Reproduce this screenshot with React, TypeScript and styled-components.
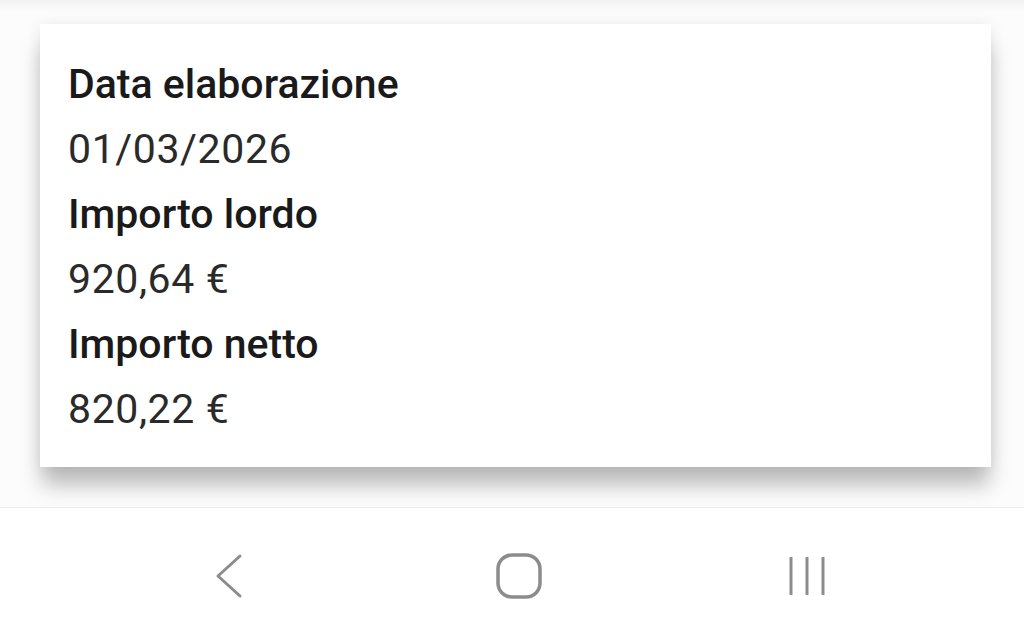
import React from "react";
import styled, { createGlobalStyle } from "styled-components";

const Global = createGlobalStyle`
  html, body { margin: 0; padding: 0; background: #ffffff; }
  body { width: 1024px; height: 637px; overflow: hidden; font-family: Roboto, "Noto Sans", sans-serif; }
`;

const Screen = styled.div`
  width: 1024px;
  height: 637px;
  display: flex;
  flex-direction: column;
`;

const Content = styled.main`
  height: 507px;
  box-sizing: border-box;
  padding: 24px 33px 0 40px;
  background: linear-gradient(#f2f2f2 0px, #fcfcfc 12px, #fcfcfc 100%);
`;

const Card = styled.section`
  height: 443px;
  box-sizing: border-box;
  background: #ffffff;
  padding: 28px 28px 0 28px;
  box-shadow: 0 20px 20px -2px rgba(0, 0, 0, 0.26), 0 0 14px rgba(0, 0, 0, 0.07);
  display: flex;
  flex-direction: column;
`;

const Line = styled.div<{ $bold?: boolean }>`
  height: 65px;
  line-height: 65px;
  font-size: 41px;
  font-weight: ${(p) => (p.$bold ? 500 : 400)};
  letter-spacing: ${(p) => (p.$bold ? "0px" : "0.6px")};
  color: ${(p) => (p.$bold ? "#1a1a1a" : "#2a2a2a")};
  white-space: nowrap;
`;

const NavBar = styled.nav`
  flex: 1;
  background: #ffffff;
  border-top: 1px solid #ececec;
  display: grid;
  grid-template-columns: 1fr 1fr 1fr;
  align-items: center;
  padding-top: 6px;
`;

const NavButton = styled.div<{ $shift: number }>`
  display: flex;
  justify-content: center;
  transform: translateX(${(p) => p.$shift}px);
`;

const Back = () => (
  <svg width="32" height="46" viewBox="0 0 32 46">
    <polyline points="27,3 5,23 27,43" fill="none" stroke="#8c8c8c" strokeWidth="3" strokeLinecap="round" strokeLinejoin="round" />
  </svg>
);

const Home = () => (
  <svg width="48" height="48" viewBox="0 0 48 48">
    <rect x="3" y="3" width="42" height="42" rx="14" fill="none" stroke="#8c8c8c" strokeWidth="3.5" />
  </svg>
);

const Recents = () => (
  <svg width="40" height="44" viewBox="0 0 40 44">
    <line x1="4" y1="3" x2="4" y2="41" stroke="#8c8c8c" strokeWidth="3" />
    <line x1="20" y1="3" x2="20" y2="41" stroke="#8c8c8c" strokeWidth="3" />
    <line x1="36" y1="3" x2="36" y2="41" stroke="#8c8c8c" strokeWidth="3" />
  </svg>
);

const rows: [string, string][] = [
  ["Data elaborazione", "01/03/2026"],
  ["Importo lordo", "920,64 €"],
  ["Importo netto", "820,22 €"],
];

export default function App() {
  return (
    <Screen>
      <Global />
      <Content>
        <Card>
          {rows.map(([label, value]) => (
            <React.Fragment key={label}>
              <Line $bold>{label}</Line>
              <Line>{value}</Line>
            </React.Fragment>
          ))}
        </Card>
      </Content>
      <NavBar>
        <NavButton $shift={58}><Back /></NavButton>
        <NavButton $shift={7}><Home /></NavButton>
        <NavButton $shift={-46}><Recents /></NavButton>
      </NavBar>
    </Screen>
  );
}
